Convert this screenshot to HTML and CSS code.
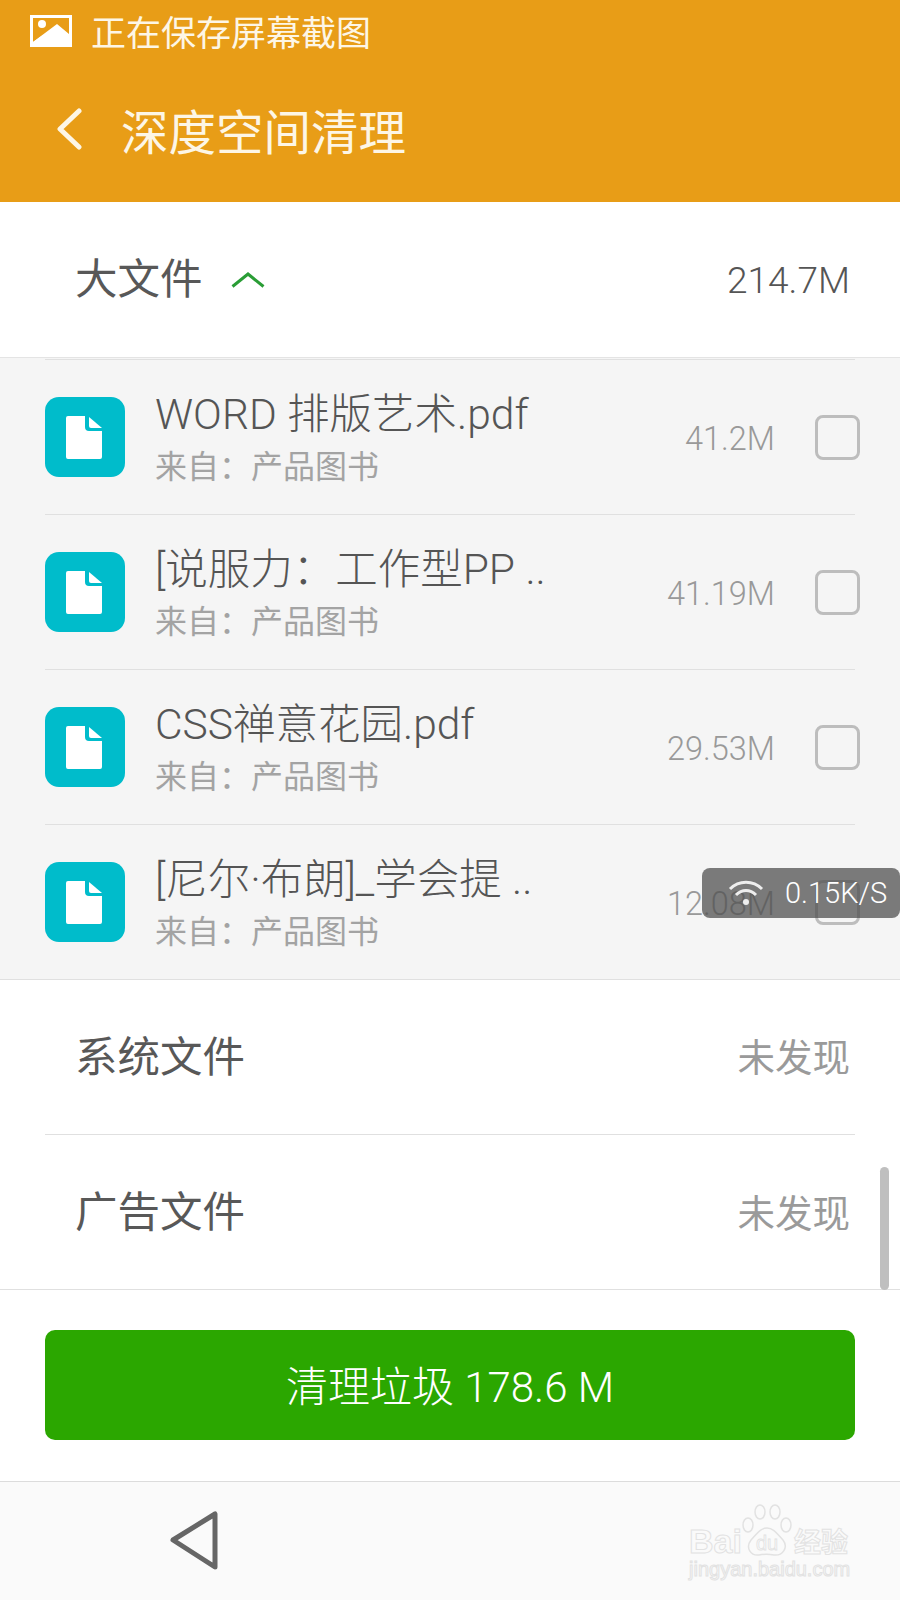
FILE: index.html
```html
<!DOCTYPE html>
<html lang="zh-CN">
<head>
  <meta charset="UTF-8">
  <meta name="viewport" content="width=device-width, initial-scale=1.0">
  <title>深度空间清理</title>
  <link rel="stylesheet" href="styles.css">
</head>
<body>
  <div class="screen">
    <header class="header">
      <div class="status">
        <svg class="status-icon" width="42" height="32" viewBox="0 0 42 32">
          <path fill="#fff" fill-rule="evenodd" d="M0 0H42V32H0ZM3 3V27L27 9L39 19V3Z"/>
          <circle cx="12" cy="9" r="4" fill="#fff"/>
          <path fill="#fff" d="M3 27L13 20L16 22L8 28Z"/>
        </svg>
        <span>正在保存屏幕截图</span>
      </div>
      <div class="appbar">
        <svg class="back" width="26" height="42" viewBox="0 0 26 42">
          <path d="M23 3L4 21L23 39" fill="none" stroke="#fdf6e6" stroke-width="5" stroke-linecap="round" stroke-linejoin="round"/>
        </svg>
        <h1>深度空间清理</h1>
      </div>
    </header>

    <main class="content">
      <div class="group-head">
        <span class="group-title">大文件</span>
        <svg class="caret" width="34" height="16" viewBox="0 0 34 16">
          <path d="M1.500 14.500L17 2L32.500 14.500" fill="none" stroke="#2a9d36" stroke-width="3"/>
        </svg>
        <span class="group-size">214.7M</span>
      </div>

      <div class="file-list">
        <div class="file-row">
          <svg class="file-icon" viewBox="0 0 80 80"><use href="#file-glyph"/></svg>
          <div class="file-text">
            <div class="file-name">WORD 排版艺术.pdf</div>
            <div class="file-from">来自&#xFF1A;产品图书</div>
          </div>
          <div class="file-size">41.2M</div>
          <div class="check"></div>
        </div>
        <div class="file-row">
          <svg class="file-icon" viewBox="0 0 80 80"><use href="#file-glyph"/></svg>
          <div class="file-text">
            <div class="file-name">[说服力&#xFF1A;工作型PP ..</div>
            <div class="file-from">来自&#xFF1A;产品图书</div>
          </div>
          <div class="file-size">41.19M</div>
          <div class="check"></div>
        </div>
        <div class="file-row">
          <svg class="file-icon" viewBox="0 0 80 80"><use href="#file-glyph"/></svg>
          <div class="file-text">
            <div class="file-name">CSS禅意花园.pdf</div>
            <div class="file-from">来自&#xFF1A;产品图书</div>
          </div>
          <div class="file-size">29.53M</div>
          <div class="check"></div>
        </div>
        <div class="file-row">
          <svg class="file-icon" viewBox="0 0 80 80"><use href="#file-glyph"/></svg>
          <div class="file-text">
            <div class="file-name">[尼尔·布朗]_学会提 ..</div>
            <div class="file-from">来自&#xFF1A;产品图书</div>
          </div>
          <div class="file-size">12.08M</div>
          <div class="check"></div>
        </div>
      </div>

      <div class="group-row">
        <div class="group-inner">
          <span class="group-title">系统文件</span>
          <span class="group-none">未发现</span>
        </div>
      </div>
      <div class="group-row last">
        <div class="group-inner">
          <span class="group-title">广告文件</span>
          <span class="group-none">未发现</span>
        </div>
      </div>
    </main>

    <div class="action">
      <button class="clean-btn">清理垃圾 178.6 M</button>
    </div>

    <nav class="navbar">
      <svg class="nav-back" width="52" height="62" viewBox="0 0 52 62">
        <path d="M5 30L47 4V57Z" fill="none" stroke="#666" stroke-width="5" stroke-linejoin="round"/>
      </svg>
    </nav>

    <div class="scrollbar"></div>

    <div class="speed">
      <svg width="36" height="28" viewBox="0 0 36 28">
        <path d="M2 10C11 1 25 1 34 10M8 16C14 10 22 10 28 16" fill="none" stroke="#eee" stroke-width="3"/>
        <circle cx="18" cy="23" r="3" fill="#eee"/>
      </svg>
      <span>0.15K/S</span>
    </div>

    <div class="watermark">
      <div class="wm-top">
        <span class="wm-bai">Bai</span>
        <svg class="wm-paw" width="50" height="54" viewBox="0 0 50 54">
          <g fill="none" stroke="#e2e2e2" stroke-width="1.500">
            <ellipse cx="6" cy="21" rx="5" ry="7"/>
            <ellipse cx="18" cy="8" rx="5" ry="7"/>
            <ellipse cx="33" cy="8" rx="5" ry="7"/>
            <ellipse cx="44" cy="21" rx="5" ry="7"/>
            <path d="M25 24C32 24 36 31 41 36C47 44 40 52 32 51C27 50 22 50 17 51C9 52 3 44 9 36C14 31 18 24 25 24Z"/>
          </g>
          <text x="25" y="46" text-anchor="middle" class="wm-du">du</text>
        </svg>
        <span class="wm-cn">经验</span>
      </div>
      <div class="wm-url">jingyan.baidu.com</div>
    </div>
  </div>

  <svg width="0" height="0" class="defs">
    <defs>
      <g id="file-glyph">
        <rect width="80" height="80" rx="14" fill="#00bccb"/>
        <path fill="#fff" d="M23 19H40V30Q40 34 44 34H57V60Q57 62 55 62H23Q21 62 21 60V21Q21 19 23 19Z"/>
        <path fill="#fff" d="M44 20L57 31H46Q44 31 44 29Z"/>
      </g>
    </defs>
  </svg>
</body>
</html>
```

FILE: styles.css
```css
* {
  box-sizing: border-box;
}
html, body {
  margin: 0;
  padding: 0;
}
body {
  font-family: Roboto, "Noto Sans CJK SC", sans-serif;
  font-weight: 300;
  background-color: #fff;
  color: #4d4d4d;
}
.screen {
  position: relative;
  width: 900px;
  height: 1600px;
  overflow: hidden;
  display: flex;
  flex-direction: column;
}
.defs {
  position: absolute;
}

/* top bar */
.header {
  height: 202px;
  flex: none;
  background-color: #e89d17;
  color: #fdf6e6;
}
.status {
  height: 62px;
  padding-left: 30px;
  padding-bottom: 2px;
  display: flex;
  align-items: center;
  gap: 19px;
  font-size: 35px;
  font-weight: 400;
}
.status-icon {
  flex: none;
  margin-top: 2px;
}
.appbar {
  height: 140px;
  padding-left: 56px;
  padding-bottom: 6px;
  display: flex;
  align-items: center;
  gap: 39px;
}
.appbar h1 {
  margin: 0;
  font-size: 47.500px;
  font-weight: 400;
}

/* groups */
.content {
  flex: none;
  height: 1088px;
  display: flex;
  flex-direction: column;
}
.group-head {
  height: 156px;
  flex: none;
  padding: 0 50px 0 75px;
  display: flex;
  align-items: center;
  border-bottom: 1px solid #e4e4e4;
}
.group-title {
  font-size: 42.500px;
  font-weight: 400;
  color: #585858;
  margin-top: -8px;
}
.caret {
  margin-left: 28px;
}
.group-size {
  margin-left: auto;
  font-size: 37px;
  font-weight: 300;
  color: #555;
  margin-top: 2px;
}
.group-row {
  height: 156px;
  flex: none;
}
.group-row.last {
  height: 154px;
  border-bottom: 1px solid #e0e0e0;
}
.group-inner {
  height: 155px;
  margin: 0 45px;
  padding: 0 5px 0 30px;
  display: flex;
  align-items: center;
  justify-content: space-between;
  border-bottom: 1px solid #e0e0e0;
}
.group-row.last .group-inner {
  height: 153px;
  border-bottom: none;
}
.group-none {
  font-size: 37.500px;
  font-weight: 400;
  color: #9a9a9a;
  margin-top: -5px;
}

/* file list */
.file-list {
  height: 622px;
  flex: none;
  overflow: hidden;
  padding-top: 1px;
  background-color: #f5f5f5;
  border-bottom: 1px solid #e0e0e0;
}
.file-row {
  height: 155px;
  margin: 0 45px;
  display: flex;
  align-items: center;
  border-top: 1px solid #e0e0e0;
}
.file-icon {
  width: 80px;
  height: 80px;
  flex: none;
  margin-right: 30px;
}
.file-text {
  width: 400px;
  flex: none;
  margin-top: 7px;
}
.file-name {
  font-size: 42.500px;
  line-height: 52px;
  white-space: nowrap;
  color: #555;
}
.file-from {
  font-size: 32px;
  line-height: 52px;
  font-weight: 400;
  color: #a3a3a3;
}
.file-size {
  width: 219px;
  flex: none;
  margin-left: 1px;
  margin-top: 4px;
  text-align: right;
  font-size: 32.500px;
  color: #999;
  font-weight: 300;
}
.check {
  width: 45px;
  height: 45px;
  flex: none;
  margin-left: 40px;
  border: 3px solid #bdbdbd;
  border-radius: 8px;
}

/* bottom */
.action {
  height: 191px;
  flex: none;
  padding: 40px 45px;
}
.clean-btn {
  display: block;
  width: 100%;
  height: 110px;
  padding-bottom: 5px;
  border: none;
  border-radius: 10px;
  background-color: #2ba700;
  color: #fff;
  font-family: inherit;
  font-size: 42px;
  font-weight: 300;
}
.navbar {
  flex: 1;
  padding-left: 168px;
  display: flex;
  align-items: center;
  background-color: #fafafa;
  border-top: 1px solid #dcdcdc;
}

/* overlays */
.scrollbar {
  position: absolute;
  left: 880px;
  top: 1167px;
  width: 9px;
  height: 123px;
  border-radius: 5px;
  background-color: #bfbfbf;
}
.speed {
  position: absolute;
  left: 702px;
  top: 868px;
  width: 198px;
  height: 50px;
  padding-left: 26px;
  display: flex;
  align-items: center;
  gap: 21px;
  border-radius: 8px;
  background-color: rgba(80, 80, 80, 0.75);
  color: #fff;
  font-size: 29px;
  font-weight: 300;
}
.watermark {
  position: absolute;
  left: 689px;
  top: 1502px;
  width: 170px;
  color: transparent;
  font-family: "Liberation Sans", sans-serif;
  -webkit-text-stroke: 1px #e2e2e2;
}
.wm-top {
  display: flex;
  align-items: flex-end;
  height: 56px;
}
.wm-bai {
  font-size: 34px;
  line-height: 34px;
  font-weight: 700;
  width: 53px;
}
.wm-paw {
  flex: none;
}
.wm-du {
  font-size: 20px;
  fill: transparent;
  stroke: #e2e2e2;
  stroke-width: 0.800;
}
.wm-cn {
  font-family: "Noto Sans CJK SC", sans-serif;
  font-size: 27px;
  line-height: 34px;
  font-weight: 700;
  white-space: nowrap;
  margin-left: 2px;
}
.wm-url {
  font-size: 20px;
  line-height: 22px;
  white-space: nowrap;
}
```
